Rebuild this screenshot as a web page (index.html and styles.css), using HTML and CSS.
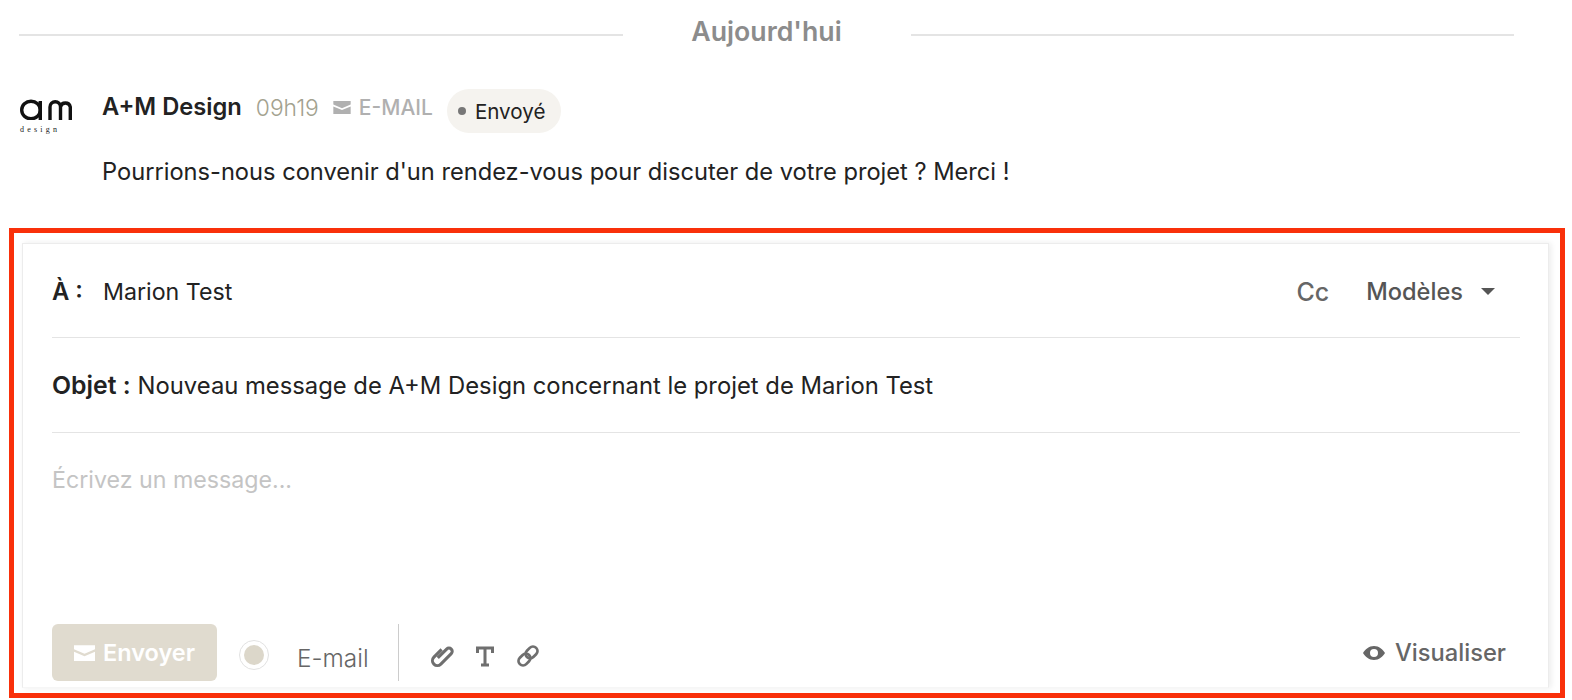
FILE: index.html
```html
<!DOCTYPE html>
<html lang="fr">
<head>
    <meta charset="UTF-8">
    <meta name="viewport" content="width=device-width, initial-scale=1.0">
    <title>Messages</title>
    <link rel="stylesheet" href="styles.css">
</head>
<body>
    <div class="day-sep">
        <span class="day-line"></span>
        <span class="day-label">Aujourd'hui</span>
        <span class="day-line"></span>
    </div>

    <div class="message">
        <div class="logo">
            <svg class="logo-mark" viewBox="0 0 52 21" aria-label="am">
                <ellipse cx="11" cy="11" rx="9.300" ry="8.800"/>
                <path d="M20.300 2v19M30 21V8a5 5 0 0 1 10.500 0V21M40.500 8a5 5 0 0 1 9.800 0V21"/>
            </svg>
            <span class="logo-sub">design</span>
        </div>
        <div class="message-body">
            <div class="message-head">
                <span class="author">A+M Design</span>
                <span class="time">09h19</span>
                <span class="channel">
                    <svg class="mail-icon" viewBox="0 0 16 12"><path d="M0 0h16v3.200L8 6.600 0 3.200z"/><path d="M0 5l8 3.400L16 5v7H0z"/></svg>
                    E-MAIL
                </span>
                <span class="status"><i class="status-dot"></i>Envoyé</span>
            </div>
            <p class="message-text">Pourrions-nous convenir d'un rendez-vous pour discuter de votre projet ? Merci !</p>
        </div>
    </div>

    <div class="highlight">
        <div class="composer">
            <div class="row row-to">
                <span class="label label-to">À :</span>
                <span class="value value-to">Marion Test</span>
                <span class="cc">Cc</span>
                <span class="templates">Modèles<i class="caret"></i></span>
            </div>
            <div class="row row-subject">
                <span class="label label-subject">Objet :</span>
                <span class="value">Nouveau message de A+M Design concernant le projet de Marion Test</span>
            </div>
            <div class="editor">Écrivez un message...</div>
            <div class="toolbar">
                <button class="send">
                    <svg class="send-icon" viewBox="0 0 16 12"><path d="M0 0h16v3.200L8 6.600 0 3.200z"/><path d="M0 5l8 3.400L16 5v7H0z"/></svg>
                    Envoyer
                </button>
                <span class="radio"><i></i></span>
                <span class="radio-label">E-mail</span>
                <span class="tools">
                    <svg class="tool" viewBox="1 1 22 22"><g transform="rotate(45 12 12)" fill="none" stroke-width="2.800"><path d="M7.500 8v10a4.500 4.500 0 0 0 9 0V4.500a3 3 0 0 0-6 0V16"/></g></svg>
                    <svg class="tool" viewBox="0 0 24 24"><path d="M4.500 9V4h15v5M12 4v17M8 21h8" fill="none" stroke-width="3"/></svg>
                    <svg class="tool" viewBox="0 0 24 24"><g transform="rotate(-45 12 12)" fill="none" stroke-width="2.800"><rect x="0.500" y="7.500" width="13" height="9" rx="4.500"/><rect x="10.500" y="7.500" width="13" height="9" rx="4.500"/></g></svg>
                </span>
                <span class="preview">
                    <svg class="eye" viewBox="0 0 22 14"><path fill-rule="evenodd" d="M11 0c5 0 9 3.600 11 7-2 3.400-6 7-11 7S2 10.400 0 7c2-3.400 6-7 11-7zm0 3a4 4 0 1 0 0 8 4 4 0 0 0 0-8z"/></svg>
                    Visualiser
                </span>
            </div>
        </div>
    </div>
</body>
</html>
```

FILE: styles.css
```css
* {
    margin: 0;
    padding: 0;
    box-sizing: border-box;
}
body {
    background: #fff;
    font-family: "Inter", "Liberation Sans", sans-serif;
    color: #222;
    height: 700px;
    overflow: hidden;
}

/* separateur du jour */
.day-sep {
    display: flex;
    align-items: center;
    height: 70px;
    padding: 0 58px 0 19px;
}
.day-line {
    flex: 1;
    height: 2px;
    background: #e4e4e4;
}
.day-label {
    width: 288px;
    text-align: center;
    font-size: 26.700px;
    font-weight: 600;
    color: #8c8c8c;
    margin-top: -8px;
}

/* message */
.message {
    display: flex;
    padding-left: 20px;
    height: 158px;
    padding-top: 18px;
}
.logo {
    width: 82px;
    display: flex;
    flex-direction: column;
    padding-top: 11px;
}
.logo-mark {
    width: 52px;
    height: 21px;
    fill: none;
    stroke: #111;
    stroke-width: 3.400;
}
.logo-sub {
    font-family: "Liberation Serif", serif;
    font-size: 8px;
    line-height: 10px;
    letter-spacing: 3.200px;
    color: #222;
    margin-top: 5px;
}
.message-head {
    display: flex;
    align-items: center;
    height: 46px;
}
.author {
    font-size: 23.700px;
    font-weight: 600;
    color: #222;
    margin-top: -9px;
}
.time {
    font-size: 22.800px;
    font-weight: 300;
    color: #a3a28f;
    margin-left: 14px;
    margin-top: -8px;
}
.channel {
    display: flex;
    align-items: center;
    gap: 8px;
    font-size: 21px;
    font-weight: 500;
    color: #b0b0b0;
    margin-left: 14px;
    margin-top: -8px;
}
.mail-icon {
    width: 18px;
    height: 13px;
    fill: #b0b0b0;
}
.status {
    display: flex;
    align-items: center;
    height: 44px;
    padding: 0 16px 0 11px;
    margin-left: 14px;
    background: #f5f3ef;
    border-radius: 22px;
    font-size: 20.600px;
    color: #222;
}
.status-dot {
    width: 8px;
    height: 8px;
    border-radius: 50%;
    background: #777;
    margin-right: 9px;
}
.message-text {
    font-size: 23.650px;
    color: #222;
    margin-top: 23px;
}

/* cadre rouge et composeur */
.highlight {
    margin-left: 9px;
    width: 1556px;
    height: 470px;
    border: 5px solid #f9300a;
    padding: 10px 11px 5px 8px;
}
.composer {
    height: 445px;
    border: 1px solid #ececec;
    border-bottom-color: #f6f6f6;
    box-shadow: 2px 0 6px rgba(0, 0, 0, 0.08);
    padding: 0 28px 0 29px;
}
.row {
    display: flex;
    align-items: center;
    border-bottom: 1px solid #e4e4e4;
    font-size: 23.800px;
}
.row-to {
    height: 94px;
    padding-top: 2px;
}
.row-subject {
    height: 95px;
}
.label {
    font-weight: 600;
    color: #222;
    margin-right: 7px;
}
.label-to {
    width: 44px;
}
.label-subject {
    font-size: 24.800px;
}
.value {
    color: #222;
}
.value-to {
    font-size: 23.200px;
}
.cc {
    margin-left: auto;
    font-size: 25px;
    font-weight: 500;
    color: #666;
}
.templates {
    display: flex;
    align-items: center;
    margin-left: 37px;
    margin-right: 25px;
    font-size: 23.600px;
    font-weight: 500;
    color: #555;
}
.caret {
    width: 0;
    height: 0;
    border-left: 7px solid transparent;
    border-right: 7px solid transparent;
    border-top: 7px solid #555;
    margin-left: 18px;
}
.editor {
    height: 191px;
    padding-top: 33px;
    font-size: 23.200px;
    color: #c4c4c4;
}
.toolbar {
    display: flex;
    align-items: center;
    height: 57px;
}
.send {
    display: flex;
    align-items: center;
    gap: 8px;
    width: 165px;
    height: 57px;
    padding-left: 22px;
    border: 0;
    border-radius: 6px;
    background: #e0dbcf;
    color: #fff;
    font-family: inherit;
    font-size: 23.500px;
    font-weight: 600;
}
.send-icon {
    width: 21px;
    height: 16px;
    fill: #fff;
}
.radio {
    display: flex;
    align-items: center;
    justify-content: center;
    width: 30px;
    height: 30px;
    margin-left: 22px;
    border: 1px solid #e2e2e2;
    border-radius: 50%;
    margin-top: 4px;
}
.radio i {
    width: 20px;
    height: 20px;
    border-radius: 50%;
    background: #dcd7ca;
}
.radio-label {
    font-size: 24.400px;
    font-weight: 300;
    color: #666;
    margin-left: 28px;
    margin-top: 10px;
}
.tools {
    display: flex;
    align-items: center;
    gap: 19px;
    height: 57px;
    margin-left: 29px;
    padding-left: 31px;
    border-left: 1px solid #ccc;
}
.tool {
    width: 24px;
    height: 24px;
    margin-top: 6px;
    stroke: #6f6f6f;
}
.preview {
    display: flex;
    align-items: center;
    gap: 10px;
    margin-left: auto;
    margin-right: 14px;
    font-size: 23.700px;
    font-weight: 500;
    color: #666;
}
.eye {
    width: 22px;
    height: 14px;
    fill: #666;
}
```
